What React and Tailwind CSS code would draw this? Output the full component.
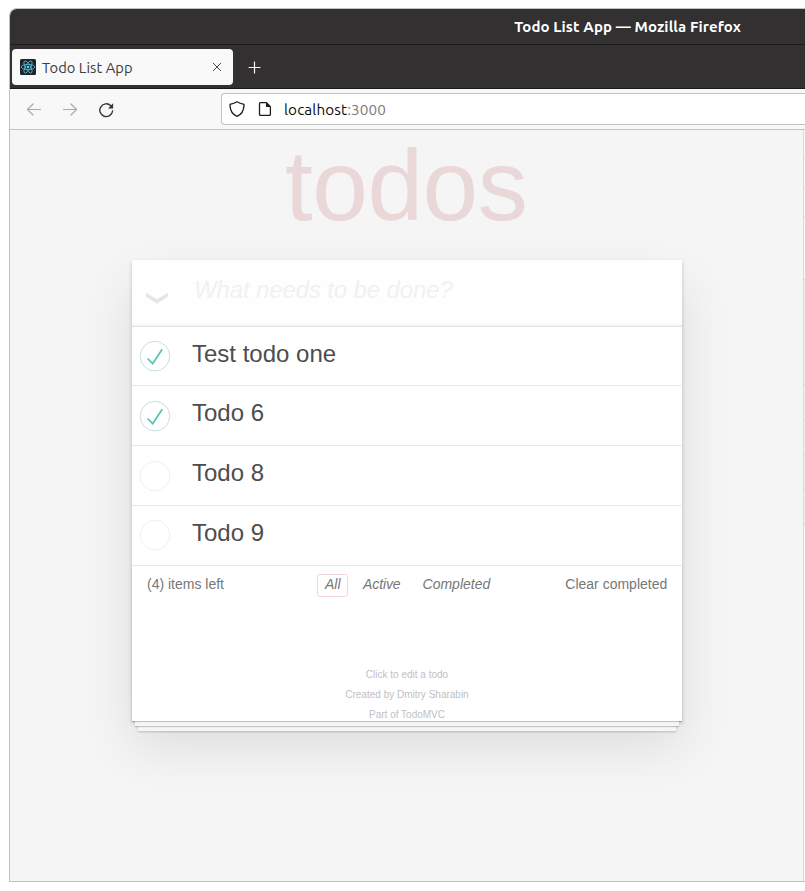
import React from "react";

const sans = "font-['Liberation_Sans',Arial,sans-serif]";
const chrome = "font-['Ubuntu','Noto_Sans',sans-serif]";

const todos = [
  { title: "Test todo one", done: true, row: "h-[59px]", text: "pb-[5px]", toggle: "" },
  { title: "Todo 6", done: true, row: "h-[60px]", text: "pb-[7px]", toggle: "" },
  { title: "Todo 8", done: false, row: "h-[60px]", text: "pb-[7px]", toggle: "" },
  { title: "Todo 9", done: false, row: "h-[60px]", text: "pb-[7px]", toggle: "mb-[2px]" },
];

function Toggle({ done, className }) {
  return (
    <svg className={`h-10 w-10 shrink-0 ${className}`} viewBox="-10 -18 100 135">
      <circle cx="50" cy="50" r="50" fill="none" stroke={done ? "#bddad5" : "#ededed"} strokeWidth="3" />
      {done && <path fill="#5dc2af" d="M72 25L42 71 27 56l-4 4 20 20 34-52z" />}
    </svg>
  );
}

function ReactLogo() {
  return (
    <svg className="h-4 w-4" viewBox="0 0 16 16" fill="none" stroke="#53c1de" strokeWidth="0.8">
      <rect width="16" height="16" rx="1.5" fill="#20232a" stroke="none" />
      <ellipse cx="8" cy="8" rx="6.8" ry="2.6" />
      <ellipse cx="8" cy="8" rx="6.8" ry="2.6" transform="rotate(60 8 8)" />
      <ellipse cx="8" cy="8" rx="6.8" ry="2.6" transform="rotate(120 8 8)" />
      <circle cx="8" cy="8" r="1.3" fill="#61dafb" stroke="none" />
    </svg>
  );
}

function TitleBar() {
  return (
    <div className="flex h-9 justify-end border-b border-[#1c1b1b] pr-[64px]">
      <span className="text-[15px] leading-[36px] font-bold tracking-[0.1px] whitespace-nowrap text-white">
        Todo List App — Mozilla Firefox
      </span>
    </div>
  );
}

function TabStrip() {
  return (
    <div className="flex h-11 border-b border-[#1c1b1b] pt-1 pl-[2px]">
      <div className="flex h-9 w-[221px] items-center rounded bg-[#f9f9fa] pr-[11px] pl-2">
        <ReactLogo />
        <span className="ml-[6px] pt-[1px] text-[14.7px] leading-9 tracking-[0.05px] whitespace-nowrap text-[#3c3c3c]">
          Todo List App
        </span>
        <svg className="ml-auto h-[10px] w-[10px]" viewBox="0 0 10 10" stroke="#4a4a4a" strokeWidth="1">
          <path d="M1 1l8 8M9 1L1 9" />
        </svg>
      </div>
      <svg className="mt-3 ml-[15px] h-[13px] w-[13px]" viewBox="0 0 13 13" stroke="#f4f4f4" strokeWidth="1.2">
        <path d="M6.5 .5v12M.5 6.5h12" />
      </svg>
    </div>
  );
}

function NavBar() {
  return (
    <div className="flex h-[41px] items-center border-b border-[#c2c2c2] bg-[#f8f8f8] pl-4">
      <svg className="mt-[1px] h-4 w-4" viewBox="0 0 16 16" fill="none" stroke="#a9a9a9" strokeWidth="1.2" strokeLinecap="round" strokeLinejoin="round">
        <path d="M14.5 7.5H1.5M7 2L1.5 7.5 7 13" />
      </svg>
      <svg className="mt-[1px] ml-5 h-4 w-4" viewBox="0 0 16 16" fill="none" stroke="#a9a9a9" strokeWidth="1.2" strokeLinecap="round" strokeLinejoin="round">
        <path d="M1.5 7.5h13M9 2l5.5 5.500L9 13" />
      </svg>
      <svg className="mt-[1px] ml-5 h-4 w-4" viewBox="0 0 16 16" fill="none" stroke="#363636" strokeWidth="1.4" strokeLinecap="round">
        <path d="M12.8 3.7A6.4 6.4 0 1 0 14.6 9" />
        <path d="M15.1 1.3v4.6a.5.5 0 0 1-.5.5H10z" fill="#363636" stroke="none" />
      </svg>
      <div className="ml-[107px] flex h-8 flex-1 items-center rounded-l border border-r-0 border-[#c2c2c2] bg-white pl-[7px]">
        <svg className="h-4 w-4" viewBox="0 0 16 16" fill="none" stroke="#1c1c1c" strokeWidth="1.3" strokeLinejoin="round">
          <path d="M8 .8C6.2 2 3.8 2.9 1.7 3.2 1 3.3.9 3.8 1 4.4c.2 4.6 2.2 9 7 10.9 4.8-1.9 6.8-6.3 7-10.9.1-.6 0-1.1-.7-1.2C12.2 2.9 9.8 2 8 .8z" />
        </svg>
        <svg className="ml-3 h-4 w-4" viewBox="0 0 16 16" fill="none" stroke="#1c1c1c" strokeWidth="1.3" strokeLinejoin="round">
          <path d="M3.5 1.7H9.5L13.4 5.6V13.4a1 1 0 0 1-1 1H3.5a1 1 0 0 1-1-1V2.7a1 1 0 0 1 1-1z" />
          <path d="M9 1.5V6h4.5z" fill="#1c1c1c" stroke="none" />
        </svg>
        <span className="ml-[11px] pt-[1px] text-[15.3px] leading-8 tracking-[0.1px] whitespace-nowrap text-[#0c0c0d]">
          localhost<span className="text-[#7b7b7b]">:3000</span>
        </span>
      </div>
    </div>
  );
}

function TodoCard() {
  return (
    <section className="mt-[25px] ml-[122px] flex h-[461px] w-[550px] flex-col bg-white shadow-[0_2px_4px_0_rgba(0,0,0,0.2),0_25px_50px_0_rgba(0,0,0,0.1)]">
      <div className="flex h-[67px] shrink-0 border-b border-[#e1e1e1] bg-[#fefefe] shadow-[inset_0_-2px_1px_rgba(0,0,0,0.03)]">
        <svg className="mt-[32px] ml-[14px] h-3 w-[22px]" viewBox="0 0 22 12" fill="#e6e6e6">
          <path d="M0 .7L11 7.3 22 .7V4.6L11.8 11.3Q11 11.8 10.2 11.3L0 4.6z" />
        </svg>
        <span className="ml-[26px] text-[24px] leading-[60px] tracking-[-0.13px] whitespace-nowrap text-[#f1f1f1] italic">
          What needs to be done?
        </span>
      </div>
      <ul className="shrink-0">
        {todos.map((t) => (
          <li key={t.title} className={`flex items-center border-b border-[#e8e8e8] ${t.row}`}>
            <Toggle done={t.done} className={t.toggle} />
            <span className={`ml-5 text-[24px] leading-[29px] whitespace-nowrap text-[#4d4d4d] ${t.text}`}>{t.title}</span>
          </li>
        ))}
      </ul>
      <div className="flex flex-1 flex-col shadow-[0_1px_1px_rgba(0,0,0,0.2),0_8px_0_-3px_#f6f6f6,0_9px_1px_-3px_rgba(0,0,0,0.2),0_16px_0_-6px_#f6f6f6,0_17px_2px_-6px_rgba(0,0,0,0.2)]">
        <div className="grid grid-cols-[170px_1fr_170px] px-[15px] pt-2 text-[14px] leading-[21px] text-[#777]">
          <span>(4) items left</span>
          <div className="flex gap-[7px] italic">
            <span className="flex h-[23px] w-[31px] items-center rounded-[3px] border border-[#efd5d5] px-[7px] pb-[2px]">All</span>
            <span className="flex h-[23px] items-center border border-transparent px-[7px] pb-[2px] tracking-[-0.1px]">Active</span>
            <span className="flex h-[23px] items-center border border-transparent pr-[7px] pl-[6px] pb-[2px]">Completed</span>
          </div>
          <span className="pr-[1px] text-right">Clear completed</span>
        </div>
        <footer className="mt-auto -mb-[4px] text-center text-[10px] leading-5 text-[#bfbfbf]">
          <p>Click to edit a todo</p>
          <p>Created by Dmitry Sharabin</p>
          <p>Part of TodoMVC</p>
        </footer>
      </div>
    </section>
  );
}

/* Visible edge of the docked side panel */
function SidePanelEdge() {
  return (
    <div className="w-[2px] shrink-0 border-l border-[#d9d9d9] bg-[#fafafa]">
      <div className="h-[29px] border-b border-[#e0e0e0]" />
      <div className="h-[29px] border-b border-[#e0e0e0]" />
      <div className="h-[29px] border-b border-[#e0e0e0]" />
      <div className="h-[63px] border-b border-[#e0d3d3]" />
      {[0, 1, 2, 3, 4, 5, 6].map((n) => (
        <div key={n} className="h-[35px] border-b border-[#e0d3d3] bg-[#fdeeee]" />
      ))}
    </div>
  );
}

export default function App() {
  return (
    <div className="h-[891px] w-[805px] overflow-hidden bg-white pt-2 pl-[9px]">
      <div className={`flex h-[874px] flex-col overflow-hidden rounded-tl-lg border-t border-b border-l border-[#c2c2c2] bg-[#f5f5f5] ${sans}`}>
        <div className={`shrink-0 ${chrome}`}>
          <div className="bg-[#323031]">
            <TitleBar />
            <TabStrip />
          </div>
          <NavBar />
        </div>
        <div className="flex min-h-0 flex-1">
          <main className="min-w-0 flex-1 overflow-hidden">
            <h1 className="ml-[275px] h-[105px] text-[100px] leading-[110px] tracking-[-0.5px] whitespace-nowrap text-[#ead7d7]">
              todos
            </h1>
            <TodoCard />
          </main>
          <SidePanelEdge />
        </div>
      </div>
    </div>
  );
}
